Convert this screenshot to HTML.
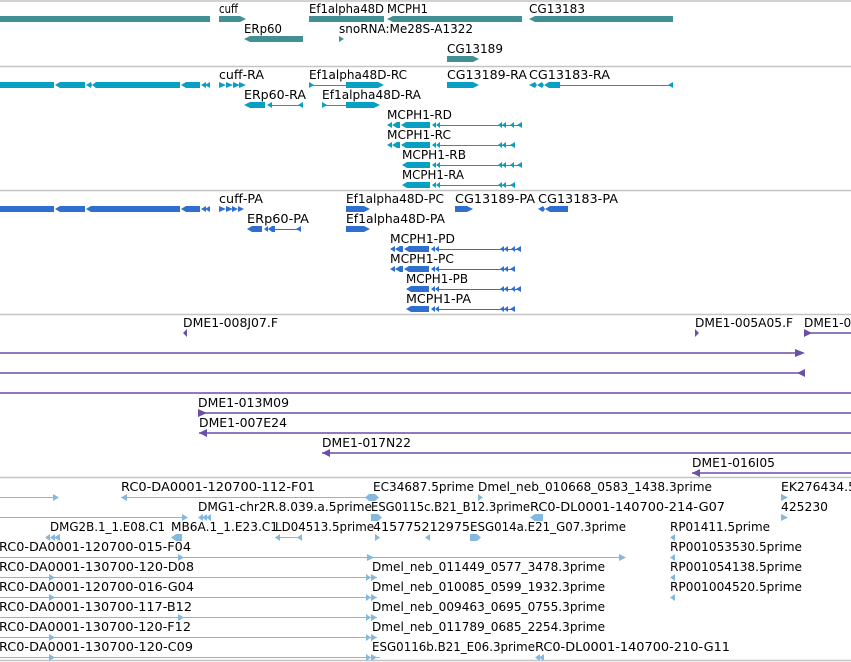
<!DOCTYPE html>
<html><head><meta charset="utf-8"><style>
html,body{margin:0;padding:0;background:#fff;width:851px;height:662px;overflow:hidden}
svg{display:block}
text{font-family:"DejaVu Sans","Liberation Sans",sans-serif;font-size:12px;fill:#000}
</style></head><body>
<svg width="851" height="662" viewBox="0 0 851 662" xmlns="http://www.w3.org/2000/svg">
<g stroke="#c4c4c4" stroke-width="1.5">
<line x1="0" y1="1" x2="851" y2="1"/><line x1="0" y1="66.5" x2="851" y2="66.5"/>
<line x1="0" y1="190.5" x2="851" y2="190.5"/><line x1="0" y1="314.5" x2="851" y2="314.5"/>
<line x1="0" y1="477.5" x2="851" y2="477.5"/><line x1="0" y1="660.5" x2="851" y2="660.5"/>
</g>
<g lengthAdjust="spacingAndGlyphs">
<!-- track1 labels -->
<text x="219" y="13" textLength="19" lengthAdjust="spacingAndGlyphs">cuff</text>
<text x="309" y="13" textLength="75" lengthAdjust="spacingAndGlyphs">Ef1alpha48D</text>
<text x="387" y="13" textLength="41" lengthAdjust="spacingAndGlyphs">MCPH1</text>
<text x="529" y="13" textLength="56" lengthAdjust="spacingAndGlyphs">CG13183</text>
<text x="244" y="33" textLength="38" lengthAdjust="spacingAndGlyphs">ERp60</text>
<text x="339" y="33" textLength="134" lengthAdjust="spacingAndGlyphs">snoRNA:Me28S-A1322</text>
<text x="447" y="53" textLength="56" lengthAdjust="spacingAndGlyphs">CG13189</text>
<!-- track2 labels -->
<text x="219" y="79" textLength="45" lengthAdjust="spacingAndGlyphs">cuff-RA</text>
<text x="309" y="79" textLength="98" lengthAdjust="spacingAndGlyphs">Ef1alpha48D-RC</text>
<text x="447" y="79" textLength="80" lengthAdjust="spacingAndGlyphs">CG13189-RA</text>
<text x="529" y="79" textLength="81" lengthAdjust="spacingAndGlyphs">CG13183-RA</text>
<text x="244" y="99" textLength="62" lengthAdjust="spacingAndGlyphs">ERp60-RA</text>
<text x="322" y="99" textLength="99" lengthAdjust="spacingAndGlyphs">Ef1alpha48D-RA</text>
<text x="387" y="119" textLength="65" lengthAdjust="spacingAndGlyphs">MCPH1-RD</text>
<text x="387" y="139" textLength="64" lengthAdjust="spacingAndGlyphs">MCPH1-RC</text>
<text x="402" y="159" textLength="64" lengthAdjust="spacingAndGlyphs">MCPH1-RB</text>
<text x="402" y="179" textLength="62" lengthAdjust="spacingAndGlyphs">MCPH1-RA</text>
<!-- track3 labels -->
<text x="219" y="203" textLength="44" lengthAdjust="spacingAndGlyphs">cuff-PA</text>
<text x="346" y="203" textLength="98" lengthAdjust="spacingAndGlyphs">Ef1alpha48D-PC</text>
<text x="455" y="203" textLength="80" lengthAdjust="spacingAndGlyphs">CG13189-PA</text>
<text x="538" y="203" textLength="80" lengthAdjust="spacingAndGlyphs">CG13183-PA</text>
<text x="247" y="223" textLength="62" lengthAdjust="spacingAndGlyphs">ERp60-PA</text>
<text x="346" y="223" textLength="99" lengthAdjust="spacingAndGlyphs">Ef1alpha48D-PA</text>
<text x="390" y="243" textLength="65" lengthAdjust="spacingAndGlyphs">MCPH1-PD</text>
<text x="390" y="263" textLength="64" lengthAdjust="spacingAndGlyphs">MCPH1-PC</text>
<text x="406" y="283" textLength="62" lengthAdjust="spacingAndGlyphs">MCPH1-PB</text>
<text x="406" y="303" textLength="65" lengthAdjust="spacingAndGlyphs">MCPH1-PA</text>
<!-- track4 labels -->
<text x="183" y="327" textLength="95" lengthAdjust="spacingAndGlyphs">DME1-008J07.F</text>
<text x="695" y="327" textLength="98" lengthAdjust="spacingAndGlyphs">DME1-005A05.F</text>
<text x="804" y="327" textLength="55" lengthAdjust="spacingAndGlyphs">DME1-00</text>
<text x="198" y="407" textLength="91" lengthAdjust="spacingAndGlyphs">DME1-013M09</text>
<text x="199" y="427" textLength="88" lengthAdjust="spacingAndGlyphs">DME1-007E24</text>
<text x="322" y="447" textLength="89" lengthAdjust="spacingAndGlyphs">DME1-017N22</text>
<text x="692" y="467" textLength="83" lengthAdjust="spacingAndGlyphs">DME1-016I05</text>
<!-- track5 labels -->
<text x="121" y="491" textLength="194" lengthAdjust="spacingAndGlyphs">RC0-DA0001-120700-112-F01</text>
<text x="373" y="491" textLength="101" lengthAdjust="spacingAndGlyphs">EC34687.5prime</text>
<text x="478" y="491" textLength="234" lengthAdjust="spacingAndGlyphs">Dmel_neb_010668_0583_1438.3prime</text>
<text x="781" y="491" textLength="75" lengthAdjust="spacingAndGlyphs">EK276434.5</text>
<text x="198" y="511" textLength="174" lengthAdjust="spacingAndGlyphs">DMG1-chr2R.8.039.a.5prime</text>
<text x="371" y="511" textLength="159" lengthAdjust="spacingAndGlyphs">ESG0115c.B21_B12.3prime</text>
<text x="530" y="511" textLength="195" lengthAdjust="spacingAndGlyphs">RC0-DL0001-140700-214-G07</text>
<text x="781" y="511" textLength="47" lengthAdjust="spacingAndGlyphs">425230</text>
<text x="50" y="531" textLength="115" lengthAdjust="spacingAndGlyphs">DMG2B.1_1.E08.C1</text>
<text x="171" y="531" textLength="107" lengthAdjust="spacingAndGlyphs">MB6A.1_1.E23.C1</text>
<text x="275" y="531" textLength="99" lengthAdjust="spacingAndGlyphs">LD04513.5prime</text>
<text x="373" y="531" textLength="97" lengthAdjust="spacingAndGlyphs">415775212975</text>
<text x="470" y="531" textLength="156" lengthAdjust="spacingAndGlyphs">ESG014a.E21_G07.3prime</text>
<text x="670" y="531" textLength="100" lengthAdjust="spacingAndGlyphs">RP01411.5prime</text>
<text x="-1" y="551" textLength="192" lengthAdjust="spacingAndGlyphs">RC0-DA0001-120700-015-F04</text>
<text x="670" y="551" textLength="132" lengthAdjust="spacingAndGlyphs">RP001053530.5prime</text>
<text x="-1" y="571" textLength="195" lengthAdjust="spacingAndGlyphs">RC0-DA0001-130700-120-D08</text>
<text x="372" y="571" textLength="233" lengthAdjust="spacingAndGlyphs">Dmel_neb_011449_0577_3478.3prime</text>
<text x="670" y="571" textLength="132" lengthAdjust="spacingAndGlyphs">RP001054138.5prime</text>
<text x="-1" y="591" textLength="195" lengthAdjust="spacingAndGlyphs">RC0-DA0001-120700-016-G04</text>
<text x="372" y="591" textLength="233" lengthAdjust="spacingAndGlyphs">Dmel_neb_010085_0599_1932.3prime</text>
<text x="670" y="591" textLength="132" lengthAdjust="spacingAndGlyphs">RP001004520.5prime</text>
<text x="-1" y="611" textLength="193" lengthAdjust="spacingAndGlyphs">RC0-DA0001-130700-117-B12</text>
<text x="372" y="611" textLength="233" lengthAdjust="spacingAndGlyphs">Dmel_neb_009463_0695_0755.3prime</text>
<text x="-1" y="631" textLength="192" lengthAdjust="spacingAndGlyphs">RC0-DA0001-130700-120-F12</text>
<text x="372" y="631" textLength="233" lengthAdjust="spacingAndGlyphs">Dmel_neb_011789_0685_2254.3prime</text>
<text x="-1" y="651" textLength="194" lengthAdjust="spacingAndGlyphs">RC0-DA0001-130700-120-C09</text>
<text x="372" y="651" textLength="163" lengthAdjust="spacingAndGlyphs">ESG0116b.B21_E06.3prime</text>
<text x="535" y="651" textLength="195" lengthAdjust="spacingAndGlyphs">RC0-DL0001-140700-210-G11</text>
</g>

<!-- track1 glyphs -->
<g fill="#428f94">
<rect x="0" y="16" width="210" height="6"/>
<polygon points="219,16 240,16 246,19 240,22 219,22"/>
<rect x="309" y="16" width="75" height="6"/>
<polygon points="387,19 393,16 522,16 522,22 393,22"/>
<polygon points="529,19 535,16 673,16 673,22 535,22"/>
<polygon points="244,39 250,36 303,36 303,42 250,42"/>
<polygon points="339,36 344,39 339,42"/>
<polygon points="447,56 473,56 479,59 473,62 447,62"/>
</g>

<!-- track2 glyphs -->
<g fill="#07a0c2" stroke="#07a0c2">
<g stroke="none">
<rect x="0" y="82" width="54" height="6"/><polygon points="55,85 60,82 85,82 85,88 60,88"/>
<polygon points="86,85 91,82 92,85 96,82 180,82 180,88 96,88 92,85 91,88"/>
<polygon points="181,85 186,82 200,82 200,88 186,88"/><polygon points="201,85 206,82 206,88"/><polygon points="205,85 210,82 210,88"/>
<polygon points="219,82 226,85 219,88"/><polygon points="226,82 233,85 226,88"/><polygon points="233,82 240,85 233,88"/><polygon points="239,82 246,85 239,88"/>
<polygon points="309,82 314,85 309,88"/><polygon points="346,82 378,82 384,85 378,88 346,88"/>
<polygon points="447,82 473,82 479,85 473,88 447,88"/>
<polygon points="529,85 535,82 537,85 542,82 544,85 549,82 560,82 560,88 549,88 544,85 542,88 537,85 535,88"/>
<polygon points="668,85 673,82 673,88"/>
<polygon points="244,105 250,102 265,102 265,108 250,108"/><polygon points="267,105 272,102 272,108"/><polygon points="298,105 303,102 303,108"/>
<polygon points="322,102 327,105 322,108"/><polygon points="346,102 374,102 380,105 374,108 346,108"/>
</g>
<g stroke-width="1">
<line x1="309" y1="85.5" x2="346" y2="85.5"/><line x1="560" y1="85.5" x2="673" y2="85.5"/>
<line x1="272" y1="105.5" x2="303" y2="105.5"/><line x1="322" y1="105.5" x2="346" y2="105.5"/>
</g>
<!-- MCPH1 transcripts -->
<g id="mR">
<polygon stroke="none" points="387,125 392,122 392,128"/><polygon stroke="none" points="392,125 397,122 400,122 400,128 397,128"/>
<polygon stroke="none" points="401,125 406,122 430,122 430,128 406,128"/>
<polygon stroke="none" points="432,125 436,122 436,128"/><polygon stroke="none" points="436,125 440,122 440,128"/>
<line x1="440" y1="125.5" x2="522" y2="125.5" stroke-width="1"/>
<polygon stroke="none" points="498,125 502,122 502,128"/><polygon stroke="none" points="502,125 506,122 506,128"/><polygon stroke="none" points="510,125 514,122 514,128"/><polygon stroke="none" points="517,125 522,122 522,128"/>
</g>
<g transform="translate(0,20)">
<polygon stroke="none" points="387,125 392,122 392,128"/><polygon stroke="none" points="392,125 397,122 400,122 400,128 397,128"/>
<polygon stroke="none" points="401,125 406,122 430,122 430,128 406,128"/>
<polygon stroke="none" points="432,125 436,122 436,128"/><polygon stroke="none" points="436,125 440,122 440,128"/>
<line x1="440" y1="125.5" x2="515" y2="125.5" stroke-width="1"/>
<polygon stroke="none" points="498,125 502,122 502,128"/><polygon stroke="none" points="502,125 506,122 506,128"/><polygon stroke="none" points="510,125 515,122 515,128"/>
</g>
<g transform="translate(0,40)">
<polygon stroke="none" points="402,125 407,122 430,122 430,128 407,128"/>
<polygon stroke="none" points="432,125 436,122 436,128"/><polygon stroke="none" points="436,125 440,122 440,128"/>
<line x1="440" y1="125.5" x2="522" y2="125.5" stroke-width="1"/>
<polygon stroke="none" points="498,125 502,122 502,128"/><polygon stroke="none" points="502,125 506,122 506,128"/><polygon stroke="none" points="510,125 514,122 514,128"/><polygon stroke="none" points="517,125 522,122 522,128"/>
</g>
<g transform="translate(0,60)">
<polygon stroke="none" points="402,125 407,122 430,122 430,128 407,128"/>
<polygon stroke="none" points="432,125 436,122 436,128"/><polygon stroke="none" points="436,125 440,122 440,128"/>
<line x1="440" y1="125.5" x2="515" y2="125.5" stroke-width="1"/>
<polygon stroke="none" points="498,125 502,122 502,128"/><polygon stroke="none" points="502,125 506,122 506,128"/><polygon stroke="none" points="510,125 515,122 515,128"/>
</g>
</g>

<!-- track3 glyphs -->
<g fill="#2e6fd0" stroke="#2e6fd0">
<g stroke="none">
<rect x="0" y="206" width="54" height="6"/><polygon points="55,209 60,206 85,206 85,212 60,212"/>
<polygon points="86,209 91,206 180,206 180,212 91,212"/>
<polygon points="181,209 186,206 200,206 200,212 186,212"/><polygon points="201,209 206,206 206,212"/><polygon points="205,209 210,206 210,212"/>
<polygon points="219,206 226,209 219,212"/><polygon points="226,206 233,209 226,212"/><polygon points="232,206 238,209 232,212"/><polygon points="238,206 244,209 238,212"/>
<polygon points="346,206 364,206 370,209 364,212 346,212"/>
<polygon points="455,206 467,206 473,209 467,212 455,212"/>
<polygon points="538,209 543,206 545,209 550,206 568,206 568,212 550,212 545,209 543,212"/>
<polygon points="247,229 252,226 262,226 262,232 252,232"/><polygon points="264,229 268,226 268,232"/><polygon points="268,229 272,226 275,226 275,232 272,232"/><polygon points="296,229 301,226 301,232"/>
<polygon points="346,226 364,226 370,229 364,232 346,232"/>
</g>
<line x1="275" y1="229.5" x2="301" y2="229.5" stroke-width="1"/>
<g transform="translate(3,124)">
<polygon stroke="none" points="387,125 392,122 392,128"/><polygon stroke="none" points="392,125 397,122 400,122 400,128 397,128"/>
<polygon stroke="none" points="401,125 406,122 426,122 426,128 406,128"/>
<polygon stroke="none" points="428,125 432,122 432,128"/><polygon stroke="none" points="432,125 436,122 436,128"/>
<line x1="436" y1="125.5" x2="518" y2="125.5" stroke-width="1"/>
<polygon stroke="none" points="497,125 501,122 501,128"/><polygon stroke="none" points="501,125 505,122 505,128"/><polygon stroke="none" points="508,125 512,122 512,128"/><polygon stroke="none" points="513,125 518,122 518,128"/>
</g>
<g transform="translate(3,144)">
<polygon stroke="none" points="387,125 392,122 392,128"/><polygon stroke="none" points="392,125 397,122 400,122 400,128 397,128"/>
<polygon stroke="none" points="401,125 406,122 426,122 426,128 406,128"/>
<polygon stroke="none" points="428,125 432,122 432,128"/><polygon stroke="none" points="432,125 436,122 436,128"/>
<line x1="436" y1="125.5" x2="512" y2="125.5" stroke-width="1"/>
<polygon stroke="none" points="497,125 501,122 501,128"/><polygon stroke="none" points="501,125 505,122 505,128"/><polygon stroke="none" points="507,125 512,122 512,128"/>
</g>
<g transform="translate(3,164)">
<polygon stroke="none" points="403,125 408,122 426,122 426,128 408,128"/>
<polygon stroke="none" points="428,125 432,122 432,128"/><polygon stroke="none" points="432,125 436,122 436,128"/>
<line x1="436" y1="125.5" x2="518" y2="125.5" stroke-width="1"/>
<polygon stroke="none" points="497,125 501,122 501,128"/><polygon stroke="none" points="501,125 505,122 505,128"/><polygon stroke="none" points="508,125 512,122 512,128"/><polygon stroke="none" points="513,125 518,122 518,128"/>
</g>
<g transform="translate(3,184)">
<polygon stroke="none" points="403,125 408,122 426,122 426,128 408,128"/>
<polygon stroke="none" points="428,125 432,122 432,128"/><polygon stroke="none" points="432,125 436,122 436,128"/>
<line x1="436" y1="125.5" x2="512" y2="125.5" stroke-width="1"/>
<polygon stroke="none" points="497,125 501,122 501,128"/><polygon stroke="none" points="501,125 505,122 505,128"/><polygon stroke="none" points="507,125 512,122 512,128"/>
</g>
</g>

<!-- track4 glyphs -->
<g fill="#6b4fa8" stroke="#6b4fa8" stroke-width="1.5">
<polygon stroke="none" points="183,333 187,329 187,337"/>
<polygon stroke="none" points="695,329 699,333 695,337"/>
<polygon stroke="none" points="804,329 812,333 804,337"/><line x1="804" y1="333" x2="851" y2="333"/>
<line x1="0" y1="353" x2="798" y2="353"/><polygon stroke="none" points="795,349 805,353 795,357"/>
<line x1="0" y1="373" x2="805" y2="373"/><polygon stroke="none" points="797,373 805,369 805,377"/>
<line x1="0" y1="393" x2="851" y2="393"/>
<line x1="198" y1="413" x2="851" y2="413"/><polygon stroke="none" points="198,409 207,413 198,417"/>
<line x1="199" y1="433" x2="851" y2="433"/><polygon stroke="none" points="199,433 207,429 207,437"/>
<line x1="322" y1="453" x2="851" y2="453"/><polygon stroke="none" points="322,453 330,449 330,457"/>
<line x1="692" y1="473" x2="851" y2="473"/><polygon stroke="none" points="692,473 700,469 700,477"/>
</g>

<!-- track5 glyphs -->
<g fill="#85b8dd" stroke="#85b8dd" stroke-width="1">
<line x1="0" y1="497.5" x2="55" y2="497.5"/><polygon stroke="none" points="53,494 59,497.5 53,501"/>
<line x1="121" y1="497.5" x2="372" y2="497.5"/><polygon stroke="none" points="121,497.5 127,494 127,501"/>
<polygon stroke="none" points="365,497.5 369,494 375,494 379,497.5 375,501 369,501"/>
<polygon stroke="none" points="478,494 483,497.5 478,501"/>
<polygon stroke="none" points="781,494 788,497.5 781,501"/>
<line x1="0" y1="517.5" x2="186" y2="517.5"/><polygon stroke="none" points="182,514 188,517.5 182,521"/>
<polygon stroke="none" points="198,517.5 203,514 203,521"/><polygon stroke="none" points="202,517.5 207,514 207,521"/><polygon stroke="none" points="206,517.5 211,514 211,521"/>
<polygon stroke="none" points="371,514 378,514 382,517.5 378,521 371,521"/>
<polygon stroke="none" points="530,517.5 535,514 543,514 543,521 535,521"/>
<polygon stroke="none" points="781,514 788,517.5 781,521"/>
<polygon stroke="none" points="45,537.5 50,534 50,541"/><polygon stroke="none" points="50,537.5 55,534 55,541"/><polygon stroke="none" points="54,537.5 60,534 60,541"/>
<polygon stroke="none" points="171,537.5 176,534 182,534 182,541 176,541"/>
<line x1="275" y1="537.5" x2="302" y2="537.5"/><polygon stroke="none" points="275,537.5 280,534 280,541"/><polygon stroke="none" points="297,537.5 302,534 302,541"/>
<polygon stroke="none" points="375,534 380,537.5 375,541"/>
<polygon stroke="none" points="425,537.5 430,534 430,541"/>
<polygon stroke="none" points="470,534 477,534 481,537.5 477,541 470,541"/>
<polygon stroke="none" points="670,537.5 675,534 675,541"/>
<line x1="0" y1="557.5" x2="625" y2="557.5"/><polygon stroke="none" points="178,554 184,557.5 178,561"/><polygon stroke="none" points="367,554 374,557.5 367,561"/><polygon stroke="none" points="619,554 626,557.5 619,561"/>
<polygon stroke="none" points="670,557.5 675,554 675,561"/>
<g id="r5">
<line x1="0" y1="577.5" x2="377" y2="577.5"/><polygon stroke="none" points="49,574 55,577.5 49,581"/><polygon stroke="none" points="366,574 371,577.5 366,581"/><polygon stroke="none" points="371,574 377,577.5 371,581"/>
</g>
<polygon stroke="none" points="670,577.5 675,574 675,581"/>
<line x1="0" y1="597.5" x2="377" y2="597.5"/><polygon stroke="none" points="49,594 55,597.5 49,601"/><polygon stroke="none" points="366,594 371,597.5 366,601"/><polygon stroke="none" points="371,594 377,597.5 371,601"/>
<polygon stroke="none" points="670,597.5 675,594 675,601"/>
<line x1="0" y1="617.5" x2="377" y2="617.5"/><polygon stroke="none" points="178,614 184,617.5 178,621"/><polygon stroke="none" points="366,614 371,617.5 366,621"/><polygon stroke="none" points="371,614 377,617.5 371,621"/>
<line x1="0" y1="637.5" x2="377" y2="637.5"/><polygon stroke="none" points="49,634 55,637.5 49,641"/><polygon stroke="none" points="366,634 371,637.5 366,641"/><polygon stroke="none" points="371,634 377,637.5 371,641"/>
<line x1="0" y1="657.5" x2="380" y2="657.5"/><polygon stroke="none" points="49,654 55,657.5 49,661"/><polygon stroke="none" points="366,654 371,657.5 366,661"/><polygon stroke="none" points="371,654 377,657.5 371,661"/>
<polygon stroke="none" points="535,657.5 540,654 540,661"/><polygon stroke="none" points="539,657.5 544,654 544,661"/>
</g>
</svg>
</body></html>
